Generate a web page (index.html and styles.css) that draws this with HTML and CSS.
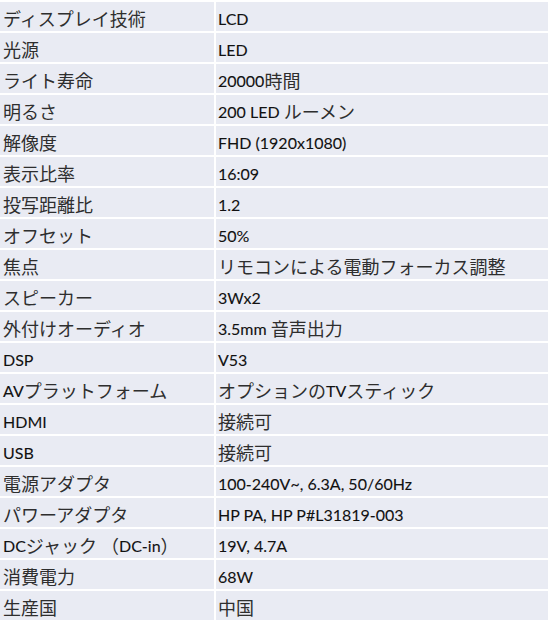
FILE: index.html
```html
<!DOCTYPE html>
<html lang="ja">
<head>
<meta charset="utf-8">
<link rel="stylesheet" href="styles.css">
</head>
<body>
<div class="spec">
  <div class="k"><span class="j">ディスプレイ技術</span></div><div class="v">LCD</div>
  <div class="k"><span class="j">光源</span></div><div class="v">LED</div>
  <div class="k"><span class="j">ライト寿命</span></div><div class="v">20000<span class="j">時間</span></div>
  <div class="k"><span class="j">明るさ</span></div><div class="v">200 LED <span class="j">ルーメン</span></div>
  <div class="k"><span class="j">解像度</span></div><div class="v">FHD (1920x1080)</div>
  <div class="k"><span class="j">表示比率</span></div><div class="v">16:09</div>
  <div class="k"><span class="j">投写距離比</span></div><div class="v">1.2</div>
  <div class="k"><span class="j">オフセット</span></div><div class="v">50%</div>
  <div class="k"><span class="j">焦点</span></div><div class="v"><span class="j">リモコンによる電動フォーカス調整</span></div>
  <div class="k"><span class="j">スピーカー</span></div><div class="v">3Wx2</div>
  <div class="k"><span class="j">外付けオーディオ</span></div><div class="v">3.5mm <span class="j">音声出力</span></div>
  <div class="k">DSP</div><div class="v">V53</div>
  <div class="k">AV<span class="j">プラットフォーム</span></div><div class="v"><span class="j">オプションの</span>TV<span class="j">スティック</span></div>
  <div class="k">HDMI</div><div class="v"><span class="j">接続可</span></div>
  <div class="k">USB</div><div class="v"><span class="j">接続可</span></div>
  <div class="k"><span class="j">電源アダプタ</span></div><div class="v">100-240V~, 6.3A, 50/60Hz</div>
  <div class="k"><span class="j">パワーアダプタ</span></div><div class="v">HP PA, HP P#L31819-003</div>
  <div class="k">DC<span class="j">ジャック （</span>DC-in<span class="j">）</span></div><div class="v">19V, 4.7A</div>
  <div class="k"><span class="j">消費電力</span></div><div class="v">68W</div>
  <div class="k"><span class="j">生産国</span></div><div class="v"><span class="j">中国</span></div>
</div>
</body>
</html>
```
FILE: styles.css
```css
html, body {
  margin: 0;
  padding: 0;
  background: #ffffff;
}
.spec {
  display: grid;
  grid-template-columns: 214px 332px;
  grid-auto-rows: 29px;
  gap: 2px;
  padding-top: 2px;
  font-family: "Lato", "Noto Sans CJK JP", sans-serif;
  font-size: 16px;
  color: #111111;
  -webkit-text-stroke: 0.1px #111111;
}
.k, .v {
  background: #e9ebf3;
  display: flex;
  align-items: center;
  white-space: pre;
  padding-top: 3px;
  box-sizing: border-box;
}
.k {
  padding-left: 3px;
}
.v {
  padding-left: 2px;
}
.j {
  font-family: "Noto Sans CJK JP", sans-serif;
  font-size: 18px;
  color: #2e2e2e;
  -webkit-text-stroke: 0;
}
```
